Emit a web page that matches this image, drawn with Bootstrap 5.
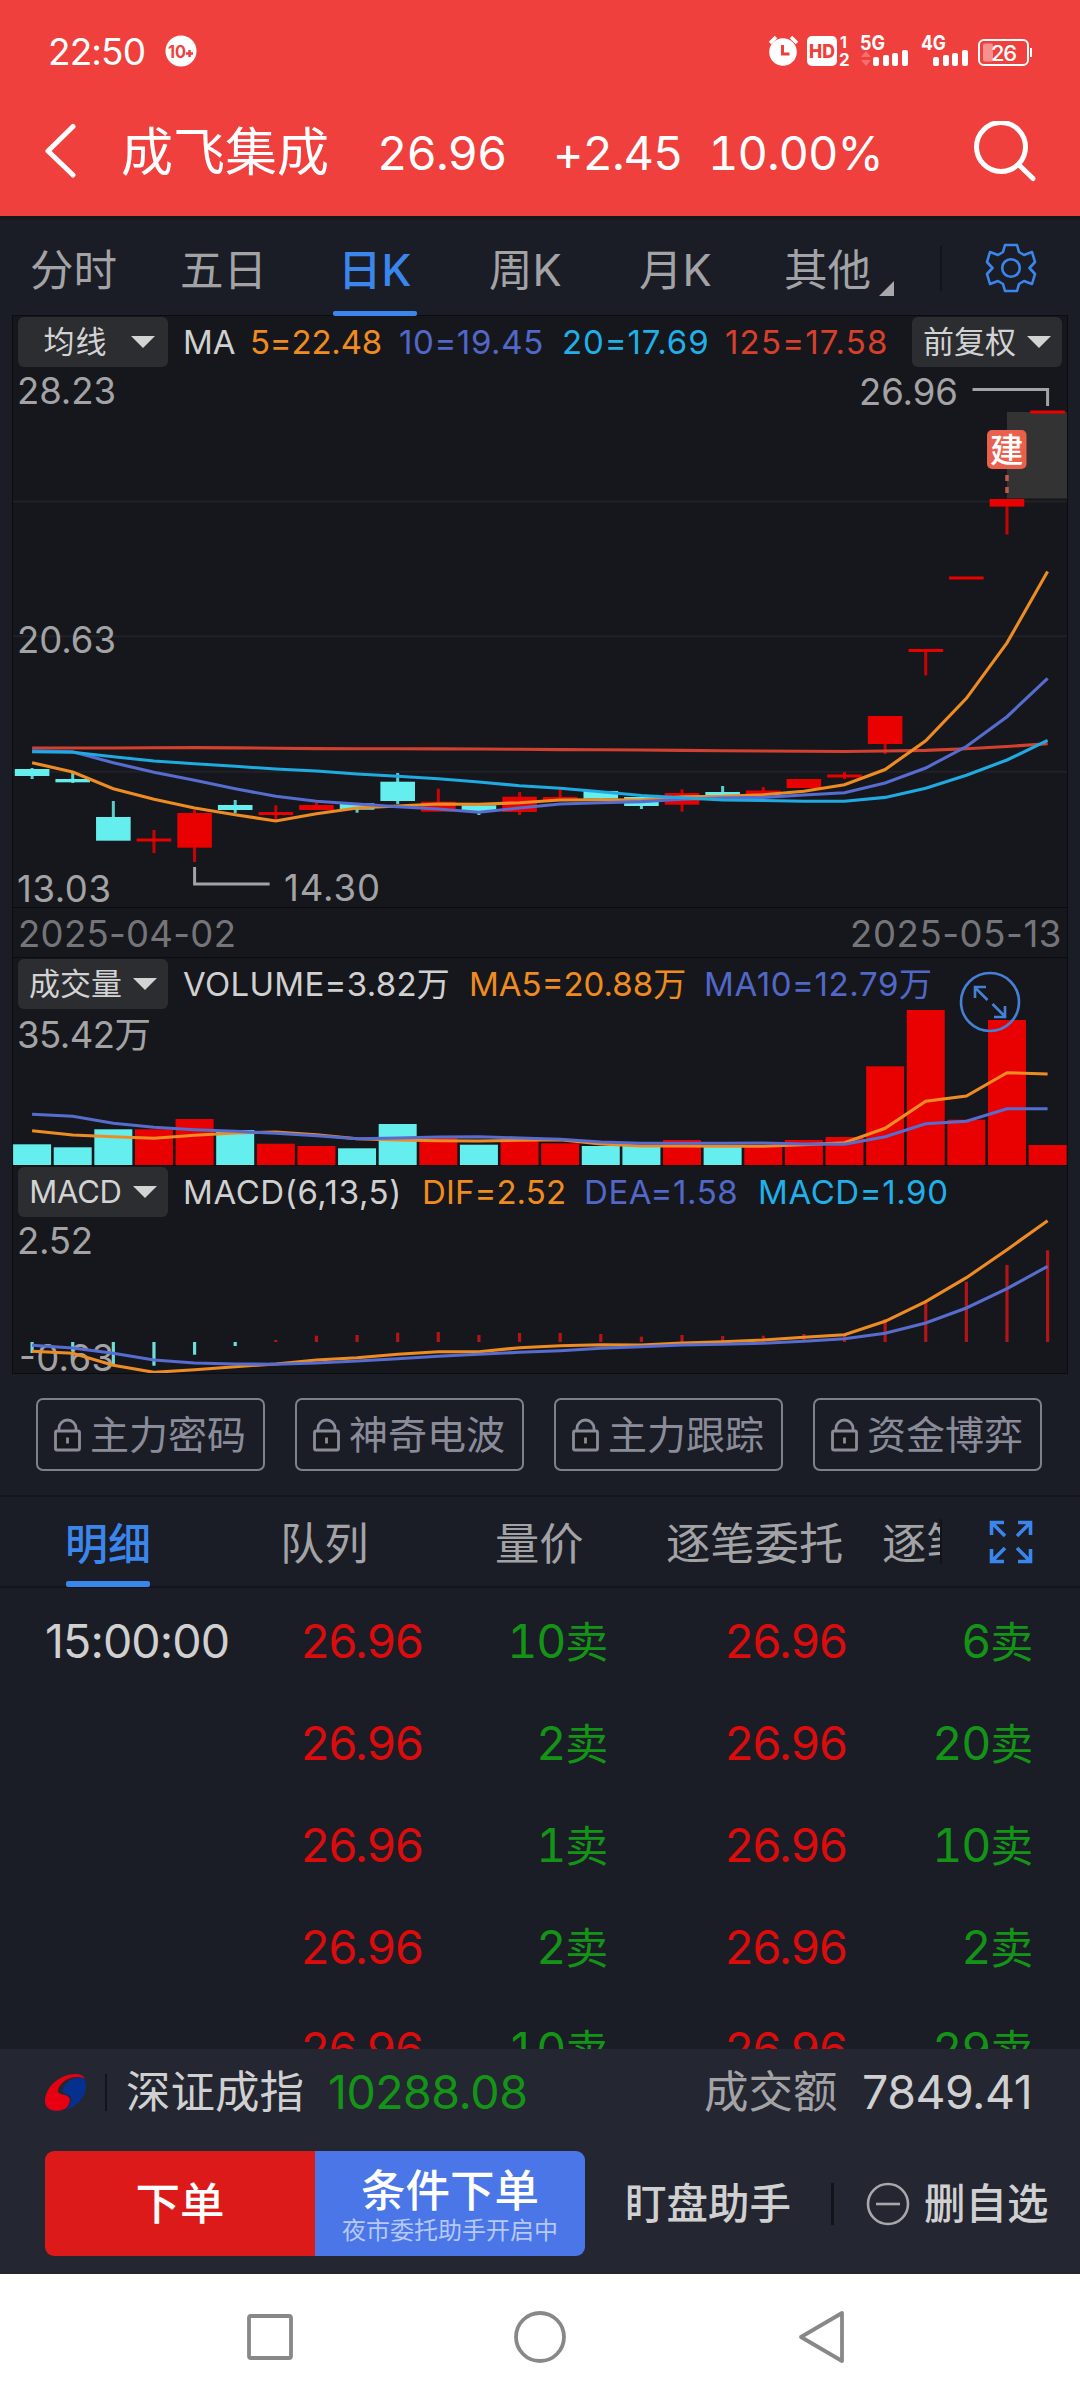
<!DOCTYPE html>
<html lang="zh-CN">
<head>
<meta charset="utf-8">
<meta name="viewport" content="width=device-width, initial-scale=1">
<title>成飞集成</title>
<link href="https://cdn.jsdelivr.net/npm/bootstrap@5.3.0/dist/css/bootstrap.min.css" rel="stylesheet">
<style>
  html, body { margin: 0; background: #1b1d26; }
  body { font-family: Inter, "Noto Sans CJK SC", sans-serif; line-height: 1; color: #d0d0d0; overflow: hidden; }
  .screen { width: 1080px; height: 2400px; overflow: hidden; }
  .screen span { white-space: nowrap; }
  svg { display: block; flex: none; }
  .cell { flex: none; }

  .top-red { background: #f0403d; color: #fff; height: 216px; }
  .status-row { height: 102px; padding-left: 48px; }
  .status-time { font-size: 37px; letter-spacing: -.9px; width: 117px; }
  .title-row { height: 98px; padding-top: 3px; font-size: 47px; padding-left: 42px; letter-spacing: -1px; font-variant-numeric: tabular-nums; }
  .stock-name { font-size: 52px; width: 256px; letter-spacing: 0; }
  .strip { height: 4px; background: #16181b; }

  .period-tabs { height: 96px; font-size: 43.5px; color: #a3a3a6; padding-left: 30px; }
  .period-tabs .cell { line-height: 100px; position: relative; height: 96px; }
  .period-tabs .chosen { color: #3b86ec; font-weight: 500; text-indent: -4px; }
  .period-tabs .chosen::after { content: ""; position: absolute; left: -9px; bottom: 0; width: 84px; height: 5px; border-radius: 2px; background: #3b86ec; }
  .vline { width: 2px; background: #121419; flex: none; }

  .panes { width: 1056px; margin: -1px 0 0 12px; background: #16171c; border: 1px solid #0b0c0f; height: 1059px; }
  .pane-head { height: 51px; padding-left: 5px; font-size: 33px; position: relative; }
  .pane-head > .cell { padding-top: 2px; }
  .pill { width: 150px; height: 50px; border-radius: 6px; background: #2c2d31; color: #d3d3d3; font-size: 31px; letter-spacing: 0; flex: none; }
  .pill::after { content: ""; border: 12px solid transparent; border-top: 12px solid #d3d3d3; border-bottom: 0; margin-left: 11px; flex: none; }
  .o { color: #f08c1e; } .b { color: #5268c8; } .c { color: #1fb0e8; } .r { color: #d6402c; }
  .dates { height: 51px; border: solid #0b0c0f; border-width: 1px 0; padding: 3px 5px 0; font-size: 36.5px; color: #757579; }
  .chart text { font-size: 36.5px; fill: #a3a3a6; }
  .zoomer { position: absolute; left: 946px; top: 13px; z-index: 2; }
  .ls0 { letter-spacing: -.2px; } .ls1 { letter-spacing: .1px; } .ls2 { letter-spacing: .3px; } .ls3 { letter-spacing: .6px; } .ls4 { letter-spacing: .9px; } .ls5 { letter-spacing: 1.2px; }

  .locks { height: 121px; padding: 24px 38px 0 36px; }
  .lock { width: 229px; height: 73px; border: 2px solid #7e808e; border-radius: 7px; color: #8a8c99; font-size: 39px; padding-left: 16px; }
  .detail-tabs { height: 93px; border: solid #13151a; border-width: 2px 0; font-size: 44.3px; color: #a3a3a6; padding-left: 65px; }
  .detail-tabs .cell { height: 89px; line-height: 94px; position: relative; }
  .detail-tabs .chosen { color: #3b86ec; font-weight: 500; font-size: 43px; }
  .detail-tabs .chosen::after { content: ""; position: absolute; left: 1px; bottom: -1px; width: 84px; height: 6px; border-radius: 2px; background: #3b86ec; }

  .ticks { height: 461px; overflow: hidden; padding-top: 2px; }
  .tick { height: 102px; font-size: 46.5px; letter-spacing: -.9px; padding-left: 45px; color: #d0d0d0; }
  .up { color: #dc0c0d; } .dn { color: #149416; }
  .tick .dn { text-align: right; letter-spacing: -1.2px; font-variant-numeric: tabular-nums; }
  .mai { font-size: 43px; }

  .dock { background: #242632; height: 225px; }
  .index-row { height: 86px; padding-top: 1px; padding-left: 45px; font-size: 46.5px; letter-spacing: -.5px; }
  .index-row .zh { font-size: 44.5px; letter-spacing: 0; }
  .action-row { height: 105px; margin-top: 16px; padding-left: 45px; font-size: 41.5px; }
  .act { width: 270px; height: 105px; padding-top: 2px; color: #fff; font-size: 44.5px; font-weight: 500; flex: none; }
  .act-buy { background: #dc1a1a; border-radius: 9px 0 0 9px; }
  .act-cond { background: #4a76e8; border-radius: 0 9px 9px 0; padding-top: 5px; }
  .act-cond small { font-size: 24px; font-weight: 400; color: #b5c8f8; margin-top: 5px; }
  .side-act { font-weight: 500; padding-top: 3px; }
  .navkeys { background: #fff; height: 126px; padding-left: 240px; }
</style>
</head>
<body>
<div class="screen d-flex flex-column">

  <header class="top-red flex-shrink-0">
    <div class="status-row d-flex align-items-center">
      <span class="status-time cell">22:50</span>
      <svg width="34" height="34" viewBox="0 0 34 34"><circle cx="16" cy="17" r="15.5" fill="#fff"/><text x="3" y="23.500" font-size="17" font-weight="700" fill="#f0403d" textLength="18" lengthAdjust="spacingAndGlyphs">10</text><path d="M21 19.500h7M24.500 16v7" stroke="#f0403d" stroke-width="2.500"/></svg>
      <svg class="ms-auto" width="314" height="40" viewBox="766 31 314 40">
        <g fill="none" stroke="#fff" stroke-width="3.500"><path d="M770 43l6-6M797 43l-6-6"/></g>
        <circle cx="783" cy="52" r="13.800" fill="#fff"/><path d="M782.500 45v9h7" fill="none" stroke="#f0403d" stroke-width="3"/>
        <rect x="807" y="36" width="30" height="30" rx="5" fill="#fff"/>
        <text x="809" y="58" font-size="19" font-weight="800" fill="#f0403d" textLength="26" lengthAdjust="spacingAndGlyphs">HD</text>
        <g fill="#fff" font-weight="700"><text x="840" y="48" font-size="16">1</text><text x="839" y="66" font-size="17">2</text>
        <text x="860" y="50" font-size="20" textLength="25" lengthAdjust="spacingAndGlyphs">5G</text><text x="921" y="50" font-size="20" textLength="25" lengthAdjust="spacingAndGlyphs">4G</text></g>
        <path d="M861 57l5-6 5 6zM861 60h10l-5 6z" fill="#f5706c"/>
        <g fill="#fff"><rect x="873" y="57" width="6" height="9" rx="2"/><rect x="883" y="55" width="6" height="11" rx="2"/><rect x="892" y="53" width="6" height="13" rx="2"/><rect x="902" y="50" width="6" height="16" rx="2"/>
        <rect x="933" y="57" width="6" height="9" rx="2"/><rect x="943" y="55" width="6" height="11" rx="2"/><rect x="952" y="53" width="6" height="13" rx="2"/><rect x="962" y="50" width="6" height="16" rx="2"/></g>
        <rect x="979" y="40" width="49" height="25" rx="5" fill="none" stroke="#fff" stroke-width="2"/><rect x="983" y="43.500" width="10" height="18" rx="2" fill="#f8908d"/><path d="M1031 48v9" stroke="#fff" stroke-width="2"/>
        <text x="991" y="61" font-size="22" fill="#fff" font-weight="500" textLength="26">26</text>
      </svg>
    </div>
    <div class="title-row d-flex align-items-center">
      <svg width="79" height="60" viewBox="42 122.500 79 60"><path d="M73 126L48 150.500l25 24" fill="none" stroke="#fff" stroke-width="5" stroke-linecap="round" stroke-linejoin="round"/></svg>
      <span class="stock-name cell">成飞集成</span>
      <span class="cell" style="width:176px">26.96</span>
      <span class="cell" style="width:155px">+2.45</span>
      <span class="cell">10.00%</span>
      <svg class="ms-auto" width="112" height="64" viewBox="968 120.500 112 64"><g fill="none" stroke="#fff" stroke-width="5"><circle cx="1001" cy="146.500" r="24.500"/><path d="M1018.500 164L1033 178" stroke-linecap="round"/></g></svg>
    </div>
  </header>
  <div class="strip flex-shrink-0"></div>

  <nav class="period-tabs d-flex flex-shrink-0 align-items-center">
    <span class="cell" style="width:150px">分时</span>
    <span class="cell" style="width:162px">五日</span>
    <span class="cell chosen" style="width:147px">日K</span>
    <span class="cell" style="width:150px">周K</span>
    <span class="cell" style="width:145px">月K</span>
    <span class="cell" style="width:95px">其他</span>
    <svg width="61" height="60" viewBox="879 240 61 60"><path d="M894 283v15h-15z" fill="#a8a8aa"/></svg>
    <span class="vline" style="height:45px"></span>
    <svg style="margin-left:43px" width="52" height="52" viewBox="-26 -26 52 52" fill="none" stroke="#3b86ec" stroke-width="2.600" stroke-linejoin="round"><circle r="8.800"/><path d="M-6-23H6L8-16 13-13 21-16 24-6 18.500 0 24 6 21 16 13 13 8 16 6 23H-6L-8 16-13 13-21 16-24 6-18.500 0-24-6-21-16-13-13-8-16Z"/></svg>
  </nav>

  <main class="panes flex-shrink-0">
    <div class="pane-head d-flex align-items-center">
      <span class="pill d-flex align-items-center justify-content-center" style="letter-spacing:1px;padding-left:12px">均线<i style="width:12px"></i></span>
      <span class="cell" style="margin-left:15px;width:67px">MA</span>
      <span class="cell o ls0" style="width:149px">5=22.48</span>
      <span class="cell b ls3" style="width:163px">10=19.45</span>
      <span class="cell c ls4" style="width:163px">20=17.69</span>
      <span class="cell r ls5" style="width:187px">125=17.58</span>
      <span class="pill d-flex align-items-center justify-content-center">前复权</span>
    </div>
    <svg id="kline" class="chart" width="1054" height="540" viewBox="13 367 1054 540"></svg>
    <div class="dates d-flex align-items-center justify-content-between"><span class="ls2">2025-04-02</span><span class="ls3">2025-05-13</span></div>
    <div class="pane-head d-flex align-items-center">
      <span class="pill d-flex align-items-center justify-content-center">成交量</span>
      <span class="cell ls2" style="margin-left:15px;width:286px">VOLUME=3.82万</span>
      <span class="cell o" style="width:235px">MA5=20.88万</span>
      <span class="cell b ls3">MA10=12.79万</span>
      <svg class="zoomer" width="62" height="62" viewBox="-31 -31 62 62" fill="none" stroke="#4580d6" stroke-width="2.600"><circle r="29"/><path d="M-2.500-2L-15-14.500M-4-15H-15V-4M2.500 2L15 14.500M4 15H15V4"/></svg>
    </div>
    <svg id="vol" class="chart" width="1054" height="157" viewBox="13 1009 1054 157"></svg>
    <div class="pane-head d-flex align-items-center">
      <span class="pill d-flex align-items-center justify-content-center" style="letter-spacing:-.2px">MACD</span>
      <span class="cell ls3" style="margin-left:15px;width:239px">MACD(6,13,5)</span>
      <span class="cell o ls1" style="width:162px">DIF=2.52</span>
      <span class="cell b ls3" style="width:174px">DEA=1.58</span>
      <span class="cell c ls3">MACD=1.90</span>
    </div>
    <svg id="macd" class="chart" width="1054" height="156" viewBox="13 1217 1054 156"></svg>
  </main>

  <section class="locks d-flex justify-content-between flex-shrink-0" id="locks"></section>

  <nav class="detail-tabs d-flex flex-shrink-0 align-items-center">
    <span class="cell chosen" style="width:215px">明细</span>
    <span class="cell" style="width:215px">队列</span>
    <span class="cell" style="width:171px">量价</span>
    <span class="cell" style="width:216px">逐笔委托</span>
    <span class="cell overflow-hidden" style="width:58px">逐笔</span>
    <span class="vline" style="height:45px"></span>
    <svg style="margin-left:47px" width="44" height="44" viewBox="-22 -22 44 44" fill="none" stroke="#3b86ec" stroke-width="3.600"><path d="M-6-6L-19-19M-7-19.500H-19.500V-7M6-6L19-19M7-19.500H19.500V-7M-6 6L-19 19M-7 19.500H-19.500V7M6 6L19 19M7 19.500H19.500V7"/></svg>
  </nav>

  <section class="ticks flex-shrink-0" id="ticks"></section>

  <footer class="dock flex-shrink-0">
    <div class="index-row d-flex align-items-center">
      <svg width="42" height="40" viewBox="0 0 42 40"><path d="M0 27C1 13 16 1 30 1c5 0 8 1 10 5C30 1 19 6 14 14c-3 6 0 7 6 8 7 2 5 8 2 12-5 6-23 6-22-7z" fill="#e60012"/><path d="M19 14c5-9 16-12 20-8 5 6 2 24-18 31 6-7 7-13 2-15-4-1-7-2-4-8z" fill="#06308e"/></svg>
      <span class="vline" style="height:37px;margin:0 19px 0 18px"></span>
      <span class="cell zh" style="width:202px">深证成指</span>
      <span class="cell dn" style="width:376px">10288.08</span>
      <span class="cell zh" style="width:158px;color:#a3a3a6">成交额</span>
      <span class="cell">7849.41</span>
    </div>
    <div class="action-row d-flex align-items-center">
      <span class="act act-buy d-flex align-items-center justify-content-center">下单</span>
      <span class="act act-cond d-flex flex-column align-items-center justify-content-center">条件下单<small>夜市委托助手开启中</small></span>
      <span class="cell side-act" style="margin-left:40px;width:206px">盯盘助手</span>
      <span class="vline" style="height:42px;width:3px"></span>
      <svg style="margin-left:32px" width="44" height="44" viewBox="-22 -22 44 44" fill="none" stroke="#a8a8aa" stroke-width="2.600"><circle r="20"/><path d="M-12 0H12"/></svg>
      <span class="cell side-act" style="margin-left:14px">删自选</span>
    </div>
  </footer>

  <div class="navkeys d-flex align-items-center flex-shrink-0">
    <svg width="610" height="60" viewBox="240 2307 610 60" fill="none" stroke="#888" stroke-width="3.800" stroke-linejoin="round"><rect x="249" y="2316" width="42" height="42" rx="2"/><circle cx="540" cy="2337" r="24"/><path d="M842 2313v48L801 2337z"/></svg>
  </div>
</div>

<script>
  const RED = '#e90000', CYAN = '#64eeee';
  const cx = i => 32.1 + i * 40.62;
  const line = (ys, color) => `<polyline fill="none" stroke="${color}" stroke-width="3.1" points="${ys.map((y, i) => cx(i).toFixed(1) + ',' + y).join(' ')}"/>`;
  const ORANGE = '#ee8c24', BLUE = '#566cce', SKY = '#1fabe2', BRICK = '#d2402f';

  // colour, body top, body bottom, wick top, wick bottom
  const candles = [
    'c 769 776 768 779', 'c 779 782.3 772.7 783', 'c 817 840.7 801 840', 'r 838.500 841.500 830 853', 'r 813 847.7 809.7 862',
    'c 805 810 800 813', 'r 812 815 805.3 820', 'r 805 810 802.7 810', 'c 803.3 809.7 803.3 812.7', 'c 781.7 801 773 804',
    'r 801.7 811.7 788.7 811', 'c 805.3 812 805.3 815', 'r 796.7 812 792 815', 'r 797 800 789.4 800', 'c 791 798.6 791 798.6',
    'c 797 806 797 809', 'r 793 804.7 789.4 811.6', 'c 792 795.5 786 798.6', 'r 790.5 794.5 787 794', 'r 779 788 779 788',
    'r 774.5 777.5 772 779', 'r 716 744 716 754', 'r 649 652 649 675.4', 'r 576.5 579.5 577 579', 'r 499 506.6 499 534.5', 'r 410.500 413.500 411 413'
  ].map(s => s.split(' '));

  let k = [501.6, 636.3, 771.8].map(y => `<path d="M13 ${y}H1067" stroke="#202227" stroke-width="2"/>`).join('');
  k += '<rect x="1007" y="412" width="61" height="86.5" fill="#333"/>';
  candles.forEach(([t, a, b, u, d], i) => {
    const f = t === 'r' ? RED : CYAN;
    k += `<rect x="${cx(i) - 17.3}" y="${a}" width="34.6" height="${b - a}" fill="${f}"/><rect x="${cx(i) - 1.5}" y="${u}" width="3" height="${d - u}" fill="${f}" opacity=".85"/>`;
  });
  k += line([748,748,748,747.8,747.6,747.9,748.2,748.6,748.7,748.8,748.9,749,749.3,749.6,749.8,750,750.4,750.7,751,751.3,751.5,751,750.4,748.8,746.5,743.8], BRICK);
  k += line([762.7,772,788.7,799.3,808,814.7,821,813.7,808,806,804,804.3,802.7,800,799.7,800,796.7,796.3,794.7,791.3,784.8,769.5,740.8,698.3,642.8,571.6], ORANGE);
  k += line([750.7,751.7,762.7,772.3,780.3,788.7,796.3,801.3,804,806.7,809,812.3,808,804,802.8,801.6,799.3,798,797.4,795,792.8,782.9,768,746.5,716.7,678.4], BLUE);
  k += line([751.7,752.3,756.7,761,763.7,766.3,769,771,774,776.3,778.7,782,785.7,788.3,791.7,795.5,797.8,800,800.5,801.3,801.3,797.4,788.2,775.2,760,740.4], SKY);
  k += `<g fill="none" stroke="#a3a3a6" stroke-width="3"><path d="M972.500 389.500H1047.600V406"/><path d="M194.600 867V884H269.600"/></g>
    <path d="M1007 475v6M1007 487v6" stroke="#c4574c" stroke-width="3.500"/><rect x="987" y="430" width="39.500" height="39" rx="5" fill="#e9604d"/>
    <text x="990" y="462" style="font-size:33.500px;fill:#fff;font-weight:500">建</text>
    <text x="17" y="404" textLength="99">28.23</text><text x="17" y="653" textLength="99">20.63</text><text x="17" y="902" textLength="94">13.03</text>
    <text x="284" y="901" textLength="96">14.30</text><text x="859" y="405" textLength="99">26.96</text>`;
  document.getElementById('kline').innerHTML = k;

  const tops = [1144.3,1147.3,1129.3,1129.3,1119,1130,1143.7,1146,1148.3,1124,1138,1144.7,1140,1143.3,1146,1146,1140,1146.7,1145,1140,1137,1066.3,1010,1119.7,1020,1145];
  let v = tops.map((y, i) => `<rect x="${Math.max(13, cx(i) - 19)}" y="${y}" width="38" height="${1165 - y}" fill="${candles[i][0] === 'r' ? RED : CYAN}"/>`).join('');
  v += line([1130.7,1135,1136.7,1138.3,1135.3,1133,1132,1134.7,1138.7,1140,1140.7,1141,1140.3,1139.7,1144,1146,1146,1146.3,1146.3,1144.7,1142.7,1128.3,1101.3,1096,1072.7,1074], ORANGE);
  v += line([1114.3,1116.3,1123.3,1127.3,1129.7,1131.3,1133.3,1135.7,1138.7,1138,1137,1136.7,1138,1139.3,1142,1143.3,1143.3,1143.3,1143,1144,1144.3,1136.7,1123.7,1121.3,1108.7,1108.7], BLUE);
  v += '<path d="M13 1166H1067" stroke="#0b0c0f" stroke-width="2"/><text x="17" y="1048" textLength="134">35.42万</text>';
  document.getElementById('vol').innerHTML = v;

  const zero = 1342, ends = [1353,1351,1364,1365.7,1354.7,1346,1340,1335.7,1335,1332.7,1332,1335,1333,1333,1334,1336.7,1335,1336,1335.7,1334,1333.5,1319,1302,1281.7,1265,1250.3];
  let m = '<text x="17" y="1253.500" textLength="76">2.52</text><text x="19" y="1370.500" textLength="95">-0.63</text>';
  m += ends.map((y, i) => `<rect x="${cx(i) - 1.6}" y="${Math.min(y, zero)}" width="3.2" height="${Math.abs(zero - y)}" fill="${y < zero ? '#b31417' : '#6fdcdc'}"/>`).join('');
  m += line([1351.3,1353.3,1365.3,1372.3,1369.7,1366.7,1364,1360,1357.7,1354.3,1351.7,1351.7,1347.7,1345.7,1344.7,1345,1343,1341.7,1340,1337.3,1334.7,1321.3,1301.7,1277.7,1249.7,1220.7], ORANGE);
  m += line([1345.3,1348,1353.3,1360,1363,1364,1364.3,1363,1361,1358.7,1356.3,1354.3,1352.3,1350.7,1348.3,1346.7,1345,1344.3,1343.3,1341.3,1338.7,1333.3,1323,1308,1288.7,1266.3], BLUE);
  document.getElementById('macd').innerHTML = m;

  document.getElementById('locks').innerHTML = ['主力密码', '神奇电波', '主力跟踪', '资金博弈'].map(t =>
    `<span class="lock d-flex align-items-center"><svg width="36" height="36" viewBox="0 0 36 36" fill="none" stroke="#8a8c99" stroke-width="2.800"><rect x="1.500" y="14" width="24" height="19" rx="1.500" fill="#16171b"/><path d="M5 14V11.500a8.500 8.500 0 0 1 17 0V14M13.500 20.500v6"/></svg>${t}</span>`).join('');

  document.getElementById('ticks').innerHTML = [['15:00:00', 10, 6], ['', 2, 20], ['', 1, 10], ['', 2, 2], ['', 10, 29]].map(([t, a, b]) =>
    `<div class="tick d-flex align-items-center"><span class="cell" style="width:256px">${t}</span><span class="cell up" style="width:135px">26.96</span><span class="cell dn" style="width:171px">${a}<span class="mai">卖</span></span><span class="cell up" style="width:135px;margin-left:118px">26.96</span><span class="cell dn" style="width:172px">${b}<span class="mai">卖</span></span></div>`).join('');
</script>
<script src="https://cdn.jsdelivr.net/npm/bootstrap@5.3.0/dist/js/bootstrap.bundle.min.js"></script>
</body>
</html>
